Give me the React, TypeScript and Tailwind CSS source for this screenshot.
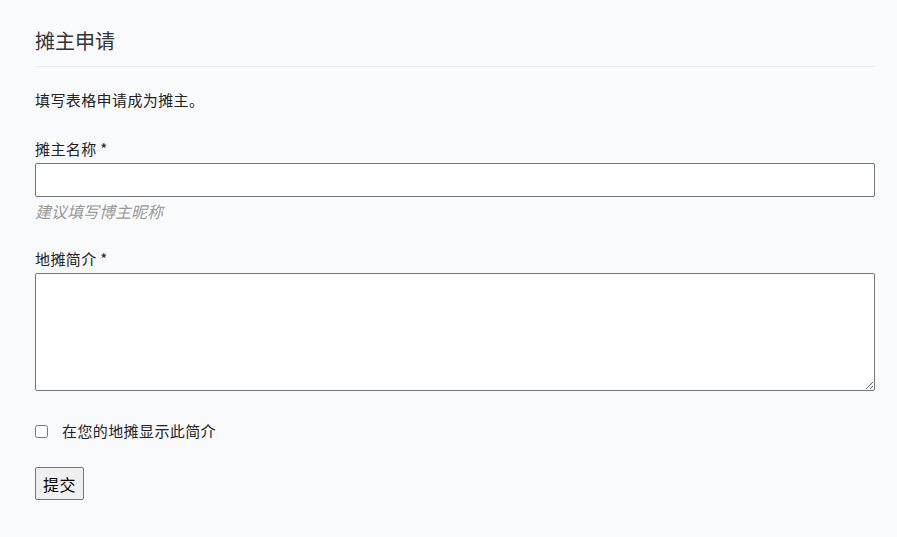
export default function App() {
  return (
    <div className="min-h-[537px] bg-[#f9fafc] pl-[35px] pr-[22px] pt-[27px] text-[15px] tracking-[0.4px] text-[#222] [font-family:'Noto_Sans_CJK_SC',sans-serif]">
      <h1 className="text-[20px] leading-[28px] tracking-normal text-[#333] pb-[11px] border-b border-[#eceef0]">摊主申请</h1>
      <p className="mt-[22px] leading-[22px]">填写表格申请成为摊主。</p>
      <form className="mt-[27px]" onSubmit={e => e.preventDefault()}>
        <label className="block leading-[22px]">摊主名称 *</label>
        <input
          type="text"
          className="block w-full h-[34px] mt-[3px] bg-white border border-[#767676] rounded-[2px] px-2 outline-none"
        />
        <div className="mt-[3px] leading-[22px] text-[16px] tracking-normal italic text-[#999]">建议填写博主昵称</div>

        <label className="block mt-[26px] leading-[22px]">地摊简介 *</label>
        <textarea className="block w-full h-[118px] mt-[3px] bg-white border border-[#767676] rounded-[2px] p-2 outline-none" />

        <div className="mt-[29px] flex items-center h-[22px]">
          <input type="checkbox" className="w-[13px] h-[13px] m-0" />
          <span className="ml-[14px]">在您的地摊显示此简介</span>
        </div>

        <button
          type="submit"
          className="mt-[25px] h-[33px] px-[7px] text-[16px] text-black bg-[#efefef] border border-[#767676] rounded-[2px]"
        >
          提交
        </button>
      </form>
    </div>
  );
}
